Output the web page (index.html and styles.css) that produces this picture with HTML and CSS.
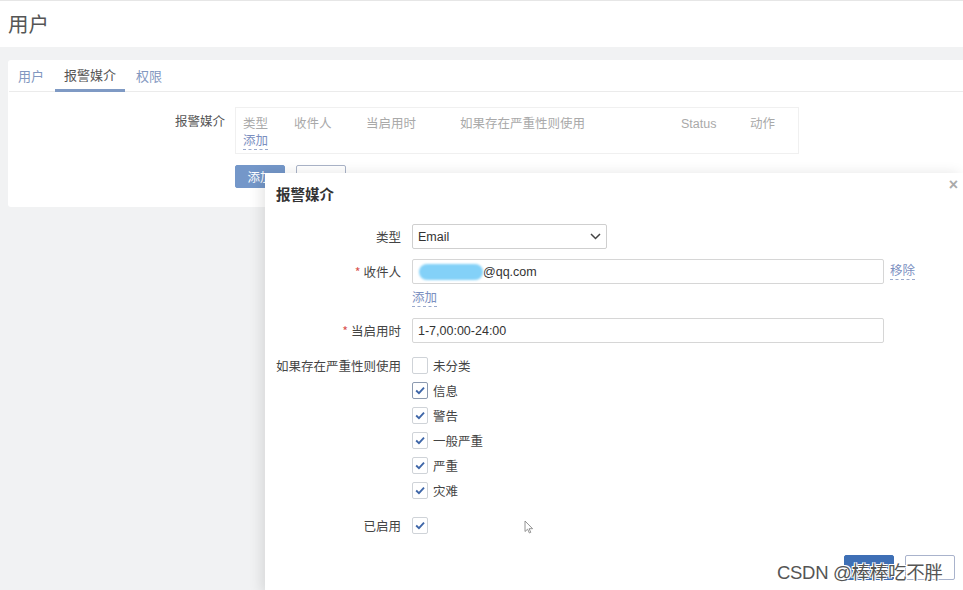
FILE: index.html
```html
<!DOCTYPE html>
<html lang="zh">
<head>
<meta charset="utf-8">
<title>用户</title>
<link rel="stylesheet" href="styles.css">
</head>
<body>
<header class="page-header"><h1>用户</h1></header>
<main class="content">
  <section class="card">
    <nav class="tabs">
      <span class="tab">用户</span>
      <span class="tab active">报警媒介</span>
      <span class="tab">权限</span>
    </nav>
    <div class="media-row">
      <div class="media-label">报警媒介</div>
      <div class="media-table">
        <div class="thead">
          <span>类型</span><span>收件人</span><span>当启用时</span><span>如果存在严重性则使用</span><span>Status</span><span>动作</span>
        </div>
        <a class="link">添加</a>
      </div>
    </div>
    <div class="card-buttons">
      <button class="btn btn-primary">添加</button>
      <button class="btn btn-alt" aria-label="取消"></button>
    </div>
  </section>
</main>

<div class="dialog">
  <div class="dialog-head">
    <span class="dialog-title">报警媒介</span>
    <span class="close">×</span>
  </div>
  <div class="dialog-body">
    <div class="frow r-type">
      <label>类型</label>
      <div class="select"><span>Email</span>
        <svg width="11" height="7" viewBox="0 0 11 7"><polyline points="1,1 5.5,5.5 10,1" fill="none" stroke="#444" stroke-width="1.5"/></svg>
      </div>
    </div>
    <div class="frow r-to">
      <label><i>*</i> 收件人</label>
      <div class="ctl-line">
        <div class="input wide"><span class="blob"></span><span>@qq.com</span></div>
        <a class="link rm">移除</a>
      </div>
    </div>
    <div class="frow r-add">
      <label></label>
      <a class="link">添加</a>
    </div>
    <div class="frow r-when">
      <label><i>*</i> 当启用时</label>
      <div class="input wide"><span>1-7,00:00-24:00</span></div>
    </div>
    <div class="frow r-sev">
      <label>如果存在严重性则使用</label>
      <ul class="checks">
        <li><span class="cb"></span>未分类</li>
        <li><span class="cb on focus"><svg viewBox="0 0 16 16"><polyline points="3.6,8 6.8,11 12.6,4.8" fill="none" stroke="#3e66a8" stroke-width="2.1"/></svg></span>信息</li>
        <li><span class="cb on"><svg viewBox="0 0 16 16"><polyline points="3.6,8 6.8,11 12.6,4.8" fill="none" stroke="#3e66a8" stroke-width="2.1"/></svg></span>警告</li>
        <li><span class="cb on"><svg viewBox="0 0 16 16"><polyline points="3.6,8 6.8,11 12.6,4.8" fill="none" stroke="#3e66a8" stroke-width="2.1"/></svg></span>一般严重</li>
        <li><span class="cb on"><svg viewBox="0 0 16 16"><polyline points="3.6,8 6.8,11 12.6,4.8" fill="none" stroke="#3e66a8" stroke-width="2.1"/></svg></span>严重</li>
        <li><span class="cb on"><svg viewBox="0 0 16 16"><polyline points="3.6,8 6.8,11 12.6,4.8" fill="none" stroke="#3e66a8" stroke-width="2.1"/></svg></span>灾难</li>
      </ul>
    </div>
    <div class="frow r-on">
      <label>已启用</label>
      <div class="check-one"><span class="cb on"><svg viewBox="0 0 16 16"><polyline points="3.6,8 6.8,11 12.6,4.8" fill="none" stroke="#3e66a8" stroke-width="2.1"/></svg></span></div>
    </div>
  </div>
  <div class="dialog-foot">
    <button class="btn btn-primary big" aria-label="添加"></button>
    <button class="btn btn-alt big" aria-label="取消"></button>
  </div>
  <svg class="cursor" width="10" height="14" viewBox="0 0 10 14"><path d="M1,1 L1,11.5 L3.6,9.2 L5.4,13 L6.8,12.3 L5.1,8.7 L8.6,8.7 Z" fill="#fff" stroke="#888" stroke-width="0.9"/></svg>
</div>

<div class="watermark">CSDN @棒棒吃不胖</div>
</body>
</html>
```

FILE: styles.css
```css
* { box-sizing: border-box; }
html, body { margin: 0; padding: 0; }
body {
  width: 963px;
  height: 590px;
  overflow: hidden;
  position: relative;
  background: #f1f2f3;
  font-family: "Liberation Sans", "Noto Sans CJK SC", sans-serif;
  font-size: 12.5px;
  color: #555;
}
.page-header {
  height: 47px;
  background: #fff;
  border-top: 1px solid #e6e6e6;
  display: flex;
  align-items: center;
  padding-left: 8px;
}
.page-header h1 {
  margin: 0;
  font-weight: normal;
  font-size: 20.5px;
  color: #555;
  font-family: "Noto Sans CJK SC", sans-serif;
  line-height: 1;
  margin-top: -2px;
}
.content { padding: 13px 0 0 8px; }
.card {
  background: #fff;
  border-radius: 3px 0 0 3px;
  height: 147px;
  padding-left: 1px;
}
.tabs {
  display: flex;
  gap: 2px;
  height: 32px;
  border-bottom: 1px solid #ebebeb;
}
.tab {
  padding: 0 9px;
  font-size: 13px;
  line-height: 31px;
  color: #8297c0;
  font-family: "Noto Sans CJK SC", sans-serif;
}
.tab.active {
  color: #555;
  border-bottom: 3px solid #7f9ac4;
  line-height: 29px;
  height: 32px;
}
.media-row {
  display: flex;
  gap: 10px;
  margin-top: 15px;
}
.media-label {
  width: 216px;
  text-align: right;
  padding-top: 4px;
  color: #555;
}
.media-table {
  width: 564px;
  height: 47px;
  border: 1px solid #f0f0f0;
  padding: 8px 0 0 7px;
}
.thead {
  display: grid;
  grid-template-columns: 51px 72px 94px 221px 69px 60px;
  color: #a9a9a9;
  line-height: 16px;
}
.link {
  color: #7b8fbf;
  border-bottom: 1px dashed #9aa9cc;
  cursor: pointer;
  line-height: 15px;
  display: inline-block;
}
.media-table .link { margin-top: 2px; }
.card-buttons {
  display: flex;
  gap: 11px;
  margin: 11px 0 0 226px;
}
.btn {
  font-family: "Noto Sans CJK SC", sans-serif;
  font-size: 12.5px;
  height: 23px;
  width: 50px;
  border-radius: 2px;
  padding: 0;
}
.btn-primary { background: #7497c9; border: 1px solid #7497c9; color: #fff; }
.btn-alt { background: #fff; border: 1px solid #aab4c8; color: #7b8fbf; }

.dialog {
  position: absolute;
  left: 265px;
  top: 173px;
  width: 698px;
  height: 420px;
  background: #fff;
  box-shadow: -4px 0 12px rgba(0,0,0,0.10);
}
.dialog-head {
  height: 44px;
  display: flex;
  align-items: center;
  padding-left: 11px;
  position: relative;
}
.dialog-title {
  font-family: "Noto Sans CJK SC", sans-serif;
  font-weight: bold;
  font-size: 14.5px;
  color: #333;
  margin-top: -3px;
}
.close {
  position: absolute;
  right: 5px;
  top: 3px;
  font-size: 16px;
  color: #aaa;
  font-weight: bold;
}
.dialog-body { padding-top: 7px; }
.frow {
  display: grid;
  grid-template-columns: 125px 1fr;
  column-gap: 11px;
  padding-left: 11px;
  align-items: center;
}
.frow > label {
  text-align: right;
  color: #444;
  font-family: "Noto Sans CJK SC", sans-serif;
}
.frow > label i { color: #d9534f; font-style: normal; }
.r-to { margin-top: 10px; }
.r-add { margin-top: 7px; }
.r-add .link { justify-self: start; }
.r-when { margin-top: 11px; }
.r-sev { margin-top: 10px; align-items: start; }
.r-sev > label { line-height: 25px; }
.r-on { margin-top: 10px; height: 25px; }
.select {
  width: 195px;
  height: 25px;
  border: 1px solid #cfcfcf;
  border-radius: 2px;
  display: flex;
  align-items: center;
  justify-content: space-between;
  padding: 0 5px 0 5px;
  color: #333;
}
.ctl-line { display: flex; align-items: center; gap: 6px; }
.input {
  height: 25px;
  border: 1px solid #d6d6d6;
  border-radius: 2px;
  display: flex;
  align-items: center;
  padding-left: 5px;
  color: #333;
}
.input.wide { width: 472px; }
.blob {
  width: 64px;
  height: 16px;
  border-radius: 8px;
  background: #83d1f8;
  filter: blur(0.8px);
  margin-left: 1px;
}
.link.rm { margin-top: 1px; }
.checks { list-style: none; margin: 0; padding: 0; }
.checks li {
  height: 25px;
  display: flex;
  align-items: center;
  gap: 5px;
  color: #444;
  font-family: "Noto Sans CJK SC", sans-serif;
}
.cb {
  width: 16px;
  height: 17px;
  border: 1px solid #cfd3d8;
  border-radius: 2px;
  background: #fff;
  display: inline-flex;
  align-items: center;
  justify-content: center;
}
.cb svg { width: 15px; height: 15px; }
.cb.focus { border-color: #8c9ab0; }
.check-one { display: flex; }
.dialog-foot {
  position: absolute;
  right: 8px;
  top: 382px;
  display: flex;
  gap: 11px;
}
.btn.big { height: 25px; width: 50px; }
.btn.big.btn-primary { background: #3e6fb5; border-color: #3e6fb5; }
.btn.big.btn-alt { border-color: #a9b3cc; }
.cursor { position: absolute; left: 259px; top: 347px; }
.watermark {
  position: absolute;
  left: 777px;
  top: 558px;
  font-family: "Liberation Sans", "Noto Sans CJK SC", sans-serif;
  font-size: 18.5px;
  color: #555;
  text-shadow: 0 0 1px #fff, 1px 1px 0 #fff, -1px -1px 0 #fff, 1px -1px 0 #fff, -1px 1px 0 #fff;
  white-space: nowrap;
  letter-spacing: -0.3px;
}
```
